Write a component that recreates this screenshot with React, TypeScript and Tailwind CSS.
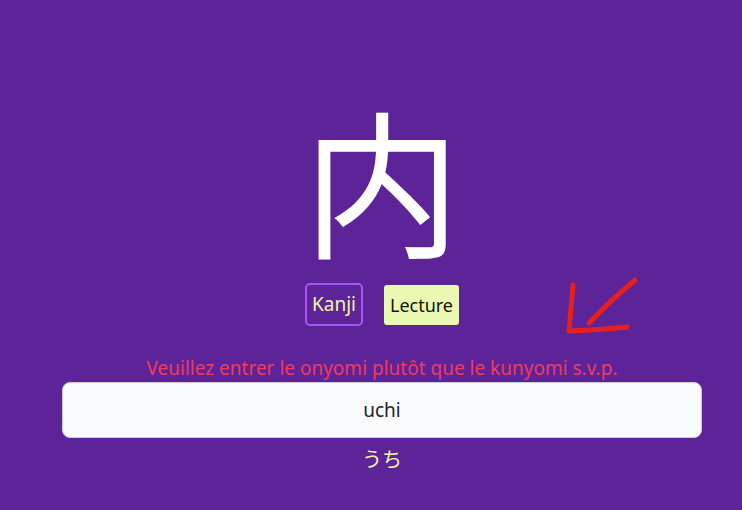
export default function App() {
  return (
    <div
      className="relative h-[510px] w-full overflow-hidden bg-[#5d2399]"
      style={{ fontFamily: '"Noto Sans", "Noto Sans CJK JP", sans-serif' }}
    >
      <div className="flex flex-col items-center pl-[22px] pt-[84px]">
        <div
          className="text-[158px] leading-[188px] text-white"
          style={{ fontFamily: '"Noto Sans CJK JP", sans-serif' }}
        >
          内
        </div>

        <div className="mt-[11px] flex items-center gap-[21px]">
          <button className="flex h-[43px] w-[58px] items-center justify-center rounded-[5px] border-2 border-[#a855f7] text-[19px] leading-none text-[#f3f6a9]">
            Kanji
          </button>
          <button className="flex h-[40px] w-[75px] items-center justify-center rounded-[3px] bg-[#e9f9b4] text-[18px] leading-none text-[#111]">
            Lecture
          </button>
        </div>

        <p className="mt-[30px] text-[19px] leading-[24px] text-[#ef3b5c]">
          Veuillez entrer le onyomi plutôt que le kunyomi s.v.p.
        </p>

        <div className="mt-[2px] flex h-[56px] w-[640px] items-center justify-center rounded-[8px] border border-[#c9cbd6] bg-[#f8fafc]">
          <span className="text-[19px] text-[#222]">uchi</span>
        </div>

        <p
          className="mt-[9px] text-[20px] leading-[24px] text-[#f3f6a9]"
          style={{ fontFamily: '"Noto Sans CJK JP", sans-serif' }}
        >
          うち
        </p>
      </div>

      {/* hand-drawn arrow pointing at the message */}
      <svg
        className="absolute left-[560px] top-[272px]"
        width="84"
        height="68"
        viewBox="0 0 84 68"
        fill="none"
        stroke="#e5201e"
        strokeWidth="5"
        strokeLinecap="round"
        strokeLinejoin="round"
      >
        <path d="M13 13 Q11 35 9 59 Q40 58 67 55" />
        <path d="M75 8 Q52 27 29 51" />
      </svg>
    </div>
  );
}
